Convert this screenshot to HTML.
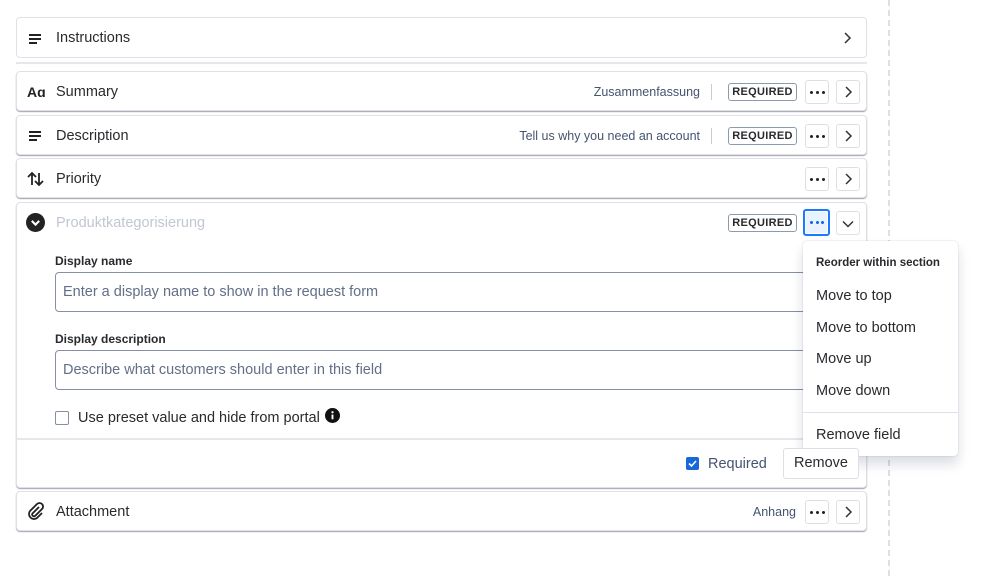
<!DOCTYPE html>
<html><head><style>
*{box-sizing:border-box;margin:0;padding:0}
body{width:999px;height:576px;background:#fff;font-family:"Liberation Sans",sans-serif;color:#172b4d;position:relative;overflow:hidden}
.a{position:absolute}
.card{position:absolute;left:16px;width:851px;border:1px solid #dfe1e6;border-radius:4px;box-shadow:0 1px 1px #a0a4ab;background:#fff}
.t{position:absolute;left:39px;font-size:14.5px;color:#292a2e}
.ic{position:absolute;left:10px}
.sub{position:absolute;font-size:12.5px;color:#44546f;text-align:right}
.sep{position:absolute;width:1px;height:16px;background:#ccc}
.req{position:absolute;width:69px;height:18px;border:1px solid #8c9bab;border-radius:3px;font-size:11px;font-weight:bold;letter-spacing:.3px;text-align:center;line-height:16px;color:#292a2e}
.btn{position:absolute;width:24px;height:24px;border:1px solid #dcdfe4;border-radius:3px;background:#fff}
.dots{font-size:0}
.dots i{position:absolute;top:10px;width:3px;height:3px;border-radius:50%;background:#222}
.chev svg{position:absolute;left:6px;top:5px}
.lbl{font-size:12px;font-weight:bold;color:#292a2e}
.inp{position:absolute;left:55px;width:820px;height:40px;border:1px solid #8590a2;border-radius:4px;font-size:14.5px;color:#626f86;padding:11px 7px}
.mi{position:absolute;left:816px;font-size:14.5px;color:#292a2e}
</style></head><body>
<div class="a" style="left:888px;top:0;height:576px;border-left:2px dashed #dcdfe4"></div>

<div class="card" style="top:17px;height:41px;box-shadow:none">
<svg class="ic" style="top:13px" width="16" height="16" viewBox="0 0 16 16"><path d="M2 4h12M2 8h12M2 12h8" stroke="#222" stroke-width="2"/></svg>
<div class="t" style="top:12px">Instructions</div>
<svg class="a" style="left:824px;top:13px" width="12" height="14" viewBox="0 0 12 14"><path d="M4 2l5 5-5 5" stroke="#333" stroke-width="1.5" fill="none"/></svg>
</div>
<div class="a" style="left:16px;top:62px;width:851px;height:2px;background:#e6e7ea"></div>

<div class="card" style="top:71px;height:40px">
<div class="a" style="left:10px;top:12px;font-size:14px;font-weight:bold;color:#222">Aɑ</div>
<div class="t" style="top:12px">Summary</div>
<div class="sub" style="right:166px;top:13px">Zusammenfassung</div><div class="sep" style="left:694px;top:12px"></div>
<div class="req" style="left:711px;top:11px">REQUIRED</div>
<div class="btn dots" style="left:788px;top:8px"><i style="left:4px"></i><i style="left:10px"></i><i style="left:16px"></i></div>
<div class="btn chev" style="left:819px;top:8px"><svg width="10" height="12" viewBox="0 0 10 12"><path d="M3 1l5 5-5 5" stroke="#333" stroke-width="1.5" fill="none"/></svg></div>
</div>
<div class="card" style="top:115px;height:40px">
<svg class="ic" style="top:12px" width="16" height="16" viewBox="0 0 16 16"><path d="M2 4h12M2 8h12M2 12h8" stroke="#222" stroke-width="2"/></svg>
<div class="t" style="top:12px">Description</div>
<div class="sub" style="right:166px;top:13px">Tell us why you need an account</div><div class="sep" style="left:694px;top:12px"></div>
<div class="req" style="left:711px;top:11px">REQUIRED</div>
<div class="btn dots" style="left:788px;top:8px"><i style="left:4px"></i><i style="left:10px"></i><i style="left:16px"></i></div>
<div class="btn chev" style="left:819px;top:8px"><svg width="10" height="12" viewBox="0 0 10 12"><path d="M3 1l5 5-5 5" stroke="#333" stroke-width="1.5" fill="none"/></svg></div>
</div>
<div class="card" style="top:158px;height:40px">
<svg class="ic" style="top:12px" width="18" height="16" viewBox="0 0 18 16"><path d="M5 14V3M1 6l4-4 4 4M12 2v11M8 10l4 4 4-4" stroke="#222" stroke-width="1.8" fill="none"/></svg>
<div class="t" style="top:12px">Priority</div>
<div class="btn dots" style="left:788px;top:8px"><i style="left:4px"></i><i style="left:10px"></i><i style="left:16px"></i></div>
<div class="btn chev" style="left:819px;top:8px"><svg width="10" height="12" viewBox="0 0 10 12"><path d="M3 1l5 5-5 5" stroke="#333" stroke-width="1.5" fill="none"/></svg></div>
</div>
<div class="card" style="top:202px;height:286px">
<svg class="a" style="left:9px;top:10px" width="19" height="19" viewBox="0 0 18 18"><circle cx="9" cy="9" r="9" fill="#222"/><path d="M5.5 7.5L9 11l3.5-3.5" stroke="#fff" stroke-width="2" fill="none"/></svg>
<div class="t" style="top:12px;color:#c1c7d0">Produktkategorisierung</div>
<div class="req" style="left:711px;top:11px">REQUIRED</div>
<div class="btn dots" style="left:786px;top:6px;width:27px;height:27px;border:2px solid #1d7afc;background:#e9f2ff;box-shadow:0 0 0 1px #fff inset"><i style="left:5px;background:#0c66e4"></i><i style="left:10.5px;background:#0c66e4"></i><i style="left:16px;background:#0c66e4"></i></div>
<div class="btn chev" style="left:819px;top:8px"><svg width="12" height="12" viewBox="0 0 12 12" style="left:5px;top:6px"><path d="M1 3.5l5 5 5-5" stroke="#333" stroke-width="1.5" fill="none"/></svg></div>
<div class="a" style="left:0;top:235px;width:849px;border-top:2px solid #e6e7ea"></div>
<div class="a" style="left:669px;top:254px;width:13px;height:13px;background:#1868db;border-radius:2px"><svg width="13" height="13" viewBox="0 0 13 13"><path d="M3 6.5l2.5 2.5 4.5-5" stroke="#fff" stroke-width="1.6" fill="none"/></svg></div>
<div class="a" style="left:691px;top:253px;font-size:14.5px;color:#44546f">Required</div>
</div>
<div class="a lbl" style="left:55px;top:254px">Display name</div>
<div class="inp" style="top:272px">Enter a display name to show in the request form</div>
<div class="a lbl" style="left:55px;top:332px">Display description</div>
<div class="inp" style="top:350px">Describe what customers should enter in this field</div>
<div class="a" style="left:55px;top:411px;width:14px;height:14px;border:1.5px solid #8590a2;border-radius:2px"></div>
<div class="a" style="left:78px;top:410px;font-size:14.5px;color:#292a2e">Use preset value and hide from portal</div>
<svg class="a" style="left:325px;top:408px" width="15" height="15" viewBox="0 0 16 16"><circle cx="8" cy="8" r="8" fill="#111"/><rect x="7" y="7" width="2" height="5" fill="#fff"/><circle cx="8" cy="4.5" r="1.2" fill="#fff"/></svg>

<div class="card" style="top:491px;height:40px">
<svg class="ic" style="top:10px" width="18" height="19" viewBox="0 0 18 19"><path d="M12 5l-6.5 6.5a1.8 1.8 0 002.5 2.5L15 7a3.5 3.5 0 00-5-5L3 9a5 5 0 007 7l5-5" stroke="#222" stroke-width="1.8" fill="none"/></svg>
<div class="t" style="top:12px">Attachment</div>
<div class="sub" style="right:70px;top:13px">Anhang</div>
<div class="btn dots" style="left:788px;top:8px"><i style="left:4px"></i><i style="left:10px"></i><i style="left:16px"></i></div>
<div class="btn chev" style="left:819px;top:8px"><svg width="10" height="12" viewBox="0 0 10 12"><path d="M3 1l5 5-5 5" stroke="#333" stroke-width="1.5" fill="none"/></svg></div>
</div>

<div class="a" style="left:803px;top:241px;width:155px;height:215px;background:#fff;border-radius:4px;box-shadow:0 0 1px rgba(9,30,66,.31),0 8px 12px rgba(9,30,66,.15)"></div>
<div class="a" style="left:816px;top:257px;font-size:11.5px;font-weight:bold;color:#292a2e">Reorder within section</div>
<div class="mi" style="top:288px">Move to top</div>
<div class="mi" style="top:320px">Move to bottom</div>
<div class="mi" style="top:351px">Move up</div>
<div class="mi" style="top:383px">Move down</div>
<div class="a" style="left:803px;top:412px;width:155px;height:1px;background:#dfe1e6"></div>
<div class="mi" style="top:427px">Remove field</div>
<div class="a" style="left:783px;top:448px;width:76px;height:31px;border:1px solid #dcdfe4;border-radius:3px;background:#fff;font-size:14.5px;text-align:center;line-height:29px;color:#292a2e">Remove</div>
</body></html>
